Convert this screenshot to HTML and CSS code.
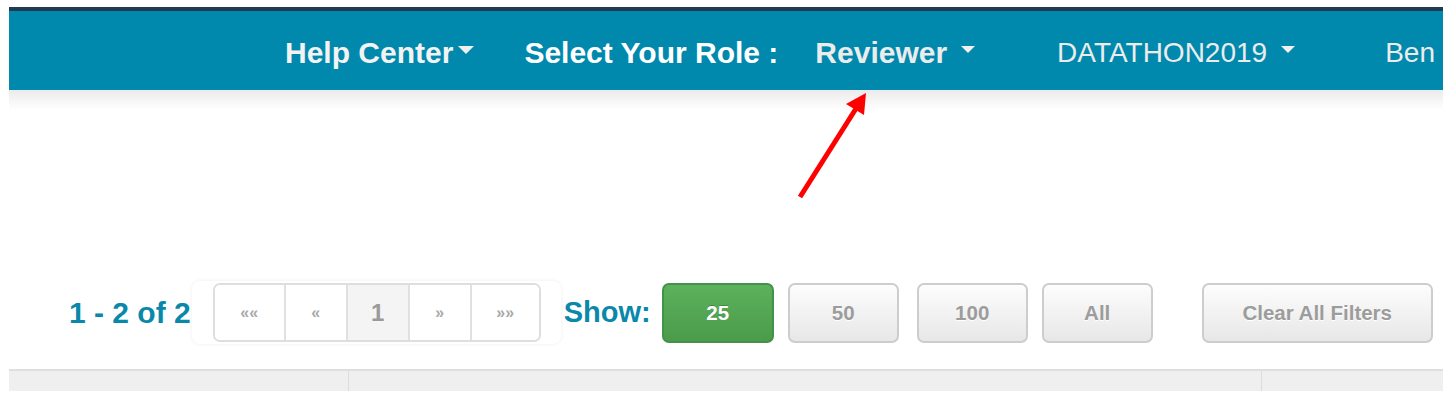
FILE: index.html
```html
<!DOCTYPE html>
<html>
<head>
<meta charset="utf-8">
<link rel="stylesheet" href="styles.css">
</head>
<body>
<div class="page">
  <div class="topline"></div>
  <nav class="navbar">
    <span class="nav-item bold help">Help Center</span><span class="caret caret-help"></span>
    <span class="nav-item bold role-label">Select Your Role :</span>
    <span class="nav-item bold role">Reviewer</span><span class="caret caret-sm"></span>
    <span class="nav-item project">DATATHON2019</span><span class="caret caret-sm"></span>
    <span class="nav-item user">Ben</span>
  </nav>
  <div class="nav-shade"></div>
  <div class="toolbar">
    <span class="count">1 - 2 of 2</span>
    <div class="pag-wrap">
      <ul class="pagination">
        <li class="pg wide">««</li>
        <li class="pg">«</li>
        <li class="pg active">1</li>
        <li class="pg">»</li>
        <li class="pg wide">»»</li>
      </ul>
    </div>
    <span class="show">Show:</span>
    <button class="btn btn-green b25">25</button>
    <button class="btn b50">50</button>
    <button class="btn b100">100</button>
    <button class="btn ball">All</button>
    <button class="btn bclear">Clear All Filters</button>
  </div>
  <div class="table-head">
    <div class="th th1"></div>
    <div class="th th2"></div>
    <div class="th th3"></div>
  </div>
</div>
<svg class="arrow" width="1451" height="401" viewBox="0 0 1451 401">
  <line x1="800" y1="197" x2="857" y2="107" stroke="#ff0000" stroke-width="5"/>
  <polygon points="866,93 846,104 864,115" fill="#ff0000"/>
</svg>
</body>
</html>
```

FILE: styles.css
```css
* { box-sizing: border-box; }
html, body { margin: 0; padding: 0; background: #ffffff; }
body { font-family: "Liberation Sans", Arial, Helvetica, sans-serif; width: 1451px; height: 401px; overflow: hidden; position: relative; }

.page { padding: 7px 8px 0 9px; }

.topline { height: 4px; background: #1f3b52; }

.navbar {
  height: 79px;
  background: #0089ad;
  display: flex;
  align-items: center;
  padding-left: 276px;
  padding-top: 4px;
  white-space: nowrap;
  overflow: hidden;
  color: #f3f3f3;
}
.nav-item { font-size: 30px; line-height: 34px; }
.bold { font-weight: bold; }
.caret {
  display: inline-block;
  width: 0; height: 0;
  border-top: 8px solid #f0f0f0;
  border-left: 8px solid transparent;
  border-right: 8px solid transparent;
  margin-top: -6px;
}
.caret-help { margin-left: 5px; border-left-width: 8.5px; border-right-width: 8.5px; }
.caret-sm { margin-left: 14px; border-top-width: 7px; border-left-width: 7.5px; border-right-width: 7.5px; }
.role-label { margin-left: 50px; color: #ffffff; }
.role { margin-left: 37px; color: #ececec; }
.project { margin-left: 82px; font-weight: normal; font-size: 28px; color: #ececec; }
.user { margin-left: 90px; font-size: 28px; color: #ececec; }

.nav-shade { height: 20px; background: linear-gradient(#ebebeb, #ffffff); }

.toolbar {
  display: flex;
  align-items: center;
  margin-top: 171px;
  padding-left: 60px;
  height: 63px;
}
.count { font-size: 30px; font-weight: bold; color: #0a88aa; white-space: nowrap; }

.pag-wrap {
  margin-left: 1px;
  padding: 2px 20px 2px 21px;
  background: #ffffff;
  border-radius: 8px;
  box-shadow: 0 0 4px rgba(0,0,0,0.07);
}
.pagination {
  list-style: none;
  margin: 0; padding: 0;
  display: flex;
  height: 59px;
  border: 2px solid #dedede;
  border-radius: 7px;
  overflow: hidden;
}
.pg {
  width: 62px;
  display: flex;
  align-items: center;
  justify-content: center;
  font-size: 16px;
  font-weight: bold;
  color: #a8a8a8;
  border-left: 2px solid #e0e0e0;
  background: #ffffff;
}
.pg:first-child { border-left: none; }
.pg.wide { width: 69px; }
.pg.active { background: #f4f4f4; font-size: 24px; font-weight: bold; color: #9a9a9a; }

.show { margin-left: 3px; font-size: 29px; font-weight: bold; color: #0a88aa; }

.btn {
  font-family: "Liberation Sans", Arial, sans-serif;
  font-size: 20.5px;
  font-weight: bold;
  height: 60px;
  width: 111px;
  border: 2px solid #cdcdcd;
  border-radius: 7px;
  background: linear-gradient(#fdfdfd, #e7e7e7);
  color: #9c9c9c;
  text-shadow: 0 1px 0 #ffffff;
  padding: 0;
}
.btn-green {
  background: linear-gradient(#5cb15c, #4b9b4b);
  border-color: #43924a;
  color: #ffffff;
  text-shadow: 0 -1px 0 rgba(0,0,0,0.2);
  width: 112px;
}
.b25 { margin-left: 11px; }
.b50 { margin-left: 14px; }
.b100 { margin-left: 18px; }
.ball { margin-left: 14px; }
.bclear { margin-left: 49px; width: 231px; }

.table-head {
  margin-top: 25px;
  display: flex;
  height: 22px;
  border-top: 2px solid #dedede;
  background: #efefef;
}
.th1 { width: 340px; border-right: 1px solid #dcdcdc; }
.th2 { width: 913px; border-right: 1px solid #dcdcdc; }
.th3 { flex: 1; }

.arrow { position: absolute; left: 0; top: 0; pointer-events: none; }
```
